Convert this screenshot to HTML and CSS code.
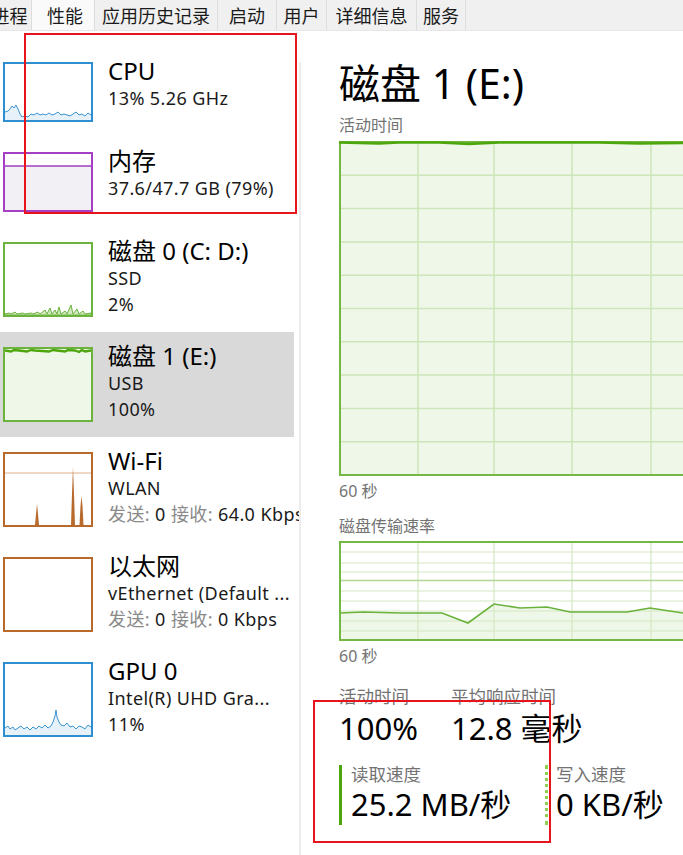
FILE: index.html
```html
<!DOCTYPE html>
<html lang="zh-CN">
<head>
<meta charset="utf-8">
<title>任务管理器 - 性能</title>
<link rel="stylesheet" href="styles.css">
</head>
<body>
<div class="app">
  <nav class="tabs">
    <div class="tab t-proc">进程</div>
    <div class="tab t-perf active">性能</div>
    <div class="tab t-hist">应用历史记录</div>
    <div class="tab t-start">启动</div>
    <div class="tab t-user">用户</div>
    <div class="tab t-detail">详细信息</div>
    <div class="tab t-svc">服务</div>
  </nav>

  <div class="main">
    <aside class="sidebar">
      <div class="item">
        <div class="thumb short blue">
          <svg viewBox="0 0 86 56" preserveAspectRatio="none">
            <polygon fill="#e6f1fa" points="0,56 0,48 3,47 5,45 7,42 9,44 11,41 13,45 15,50 17,53 20,52 23,53 26,50 29,51 32,49 35,51 38,50 41,51 44,49 47,51 50,50 53,48 56,51 59,50 62,51 65,52 68,50 71,48 74,51 77,50 80,52 83,49 86,51 86,56"/>
            <polyline fill="none" stroke="#3b95d1" stroke-width="1" points="0,48 3,47 5,45 7,42 9,44 11,41 13,45 15,50 17,53 20,52 23,53 26,50 29,51 32,49 35,51 38,50 41,51 44,49 47,51 50,50 53,48 56,51 59,50 62,51 65,52 68,50 71,48 74,51 77,50 80,52 83,49 86,51"/>
          </svg>
        </div>
        <div class="info">
          <div class="name">CPU</div>
          <div class="line">13% 5.26 GHz</div>
        </div>
      </div>

      <div class="item">
        <div class="thumb short purple">
          <svg viewBox="0 0 86 56" preserveAspectRatio="none">
            <rect x="0" y="12" width="86" height="44" fill="#f2f0f4"/>
            <line x1="0" y1="12" x2="86" y2="12" stroke="#a13fc1" stroke-width="1.6"/>
          </svg>
        </div>
        <div class="info">
          <div class="name">内存</div>
          <div class="line">37.6/47.7 GB (79%)</div>
        </div>
      </div>

      <div class="item">
        <div class="thumb green">
          <svg viewBox="0 0 86 71" preserveAspectRatio="none">
            <polygon fill="#d3e9c2" stroke="#6ab23c" stroke-width="1" points="0,71 0,70 4,69 6,70 10,68 12,70 18,69 20,70 26,69 28,70 33,68 35,70 40,66 42,70 45,64 47,70 50,66 52,70 54,63 56,70 60,67 62,70 66,61 68,70 72,65 74,70 78,67 80,70 86,69 86,71"/>
          </svg>
        </div>
        <div class="info">
          <div class="name">磁盘 0 (C: D:)</div>
          <div class="line">SSD</div>
          <div class="line">2%</div>
        </div>
      </div>

      <div class="item selected">
        <div class="thumb green">
          <svg viewBox="0 0 86 71" preserveAspectRatio="none">
            <rect x="0" y="0" width="86" height="71" fill="#eff7e9"/>
            <polyline fill="none" stroke="#4da60c" stroke-width="2.4" points="0,1.5 6,2.5 9,1 14,1.5 22,2.5 26,1 30,1.5 44,2.5 48,1 52,1.5 60,2.5 63,1 70,1.5 74,3 77,1 80,2.5 86,1.5"/>
          </svg>
        </div>
        <div class="info">
          <div class="name">磁盘 1 (E:)</div>
          <div class="line">USB</div>
          <div class="line">100%</div>
        </div>
      </div>

      <div class="item">
        <div class="thumb orange">
          <svg viewBox="0 0 86 71" preserveAspectRatio="none">
            <line x1="0" y1="19" x2="86" y2="19" stroke="#deb08a" stroke-width="1"/>
            <polygon fill="#b8692c" points="30,71 31,60 32,50 33,60 34,71"/>
            <polygon fill="#b8692c" points="66,71 67,40 68,13 69,40 70,71"/>
            <polygon fill="#b8692c" points="74.5,71 75.5,52 76.5,42 77.5,52 78.5,71"/>
          </svg>
        </div>
        <div class="info">
          <div class="name">Wi-Fi</div>
          <div class="line">WLAN</div>
          <div class="line"><span class="muted">发送:</span> 0 <span class="muted">接收:</span> 64.0 Kbps</div>
        </div>
      </div>

      <div class="item">
        <div class="thumb orange"></div>
        <div class="info">
          <div class="name">以太网</div>
          <div class="line">vEthernet (Default ...</div>
          <div class="line"><span class="muted">发送:</span> 0 <span class="muted">接收:</span> 0 Kbps</div>
        </div>
      </div>

      <div class="item">
        <div class="thumb blue">
          <svg viewBox="0 0 86 71" preserveAspectRatio="none">
            <polygon fill="#e6f1fa" points="0,71 0,64 3,62 5,65 8,63 10,66 13,64 16,62 19,65 22,63 25,66 28,63 31,65 34,62 37,64 40,61 43,64 46,62 48,58 50,52 51,46 52,53 54,58 56,61 59,62 62,59 65,63 68,62 71,65 74,62 77,63 80,65 83,61 86,63 86,71"/>
            <polyline fill="none" stroke="#3b95d1" stroke-width="1" points="0,64 3,62 5,65 8,63 10,66 13,64 16,62 19,65 22,63 25,66 28,63 31,65 34,62 37,64 40,61 43,64 46,62 48,58 50,52 51,46 52,53 54,58 56,61 59,62 62,59 65,63 68,62 71,65 74,62 77,63 80,65 83,61 86,63"/>
          </svg>
        </div>
        <div class="info">
          <div class="name">GPU 0</div>
          <div class="line">Intel(R) UHD Gra...</div>
          <div class="line">11%</div>
        </div>
      </div>
    </aside>

    <div class="divider"></div>

    <section class="detail">
      <h1 class="title">磁盘 1 (E:)</h1>
      <div class="label title-gap">活动时间</div>
      <div class="graph g-active">
        <svg width="400" height="335" viewBox="0 0 400 335">
          <rect x="1" y="1" width="398" height="333" fill="#eff7e9"/>
          <g stroke="#cde5b9" stroke-width="1.5">
            <line x1="79" y1="0" x2="79" y2="335"/>
            <line x1="155" y1="0" x2="155" y2="335"/>
            <line x1="233" y1="0" x2="233" y2="335"/>
            <line x1="312" y1="0" x2="312" y2="335"/>
            <line x1="390" y1="0" x2="390" y2="335"/>
            <line x1="0" y1="34.3" x2="400" y2="34.3"/>
            <line x1="0" y1="67.6" x2="400" y2="67.6"/>
            <line x1="0" y1="100.9" x2="400" y2="100.9"/>
            <line x1="0" y1="134.2" x2="400" y2="134.2"/>
            <line x1="0" y1="167.5" x2="400" y2="167.5"/>
            <line x1="0" y1="200.8" x2="400" y2="200.8"/>
            <line x1="0" y1="234.1" x2="400" y2="234.1"/>
            <line x1="0" y1="267.4" x2="400" y2="267.4"/>
            <line x1="0" y1="300.7" x2="400" y2="300.7"/>
          </g>
          <rect x="1" y="1" width="398" height="333" fill="none" stroke="#72b843" stroke-width="2"/>
          <polyline fill="none" stroke="#4da60c" stroke-width="2.4" points="0,1.5 40,2.5 60,1.5 100,1.5 130,3 160,1.5 260,1.5 300,2.5 400,1.5"/>
        </svg>
      </div>
      <div class="axis">60 秒</div>

      <div class="label rate-gap">磁盘传输速率</div>
      <div class="graph g-rate">
        <svg width="400" height="100" viewBox="0 0 400 100">
          <rect x="1" y="1" width="398" height="98" fill="#ffffff"/>
          <polygon fill="#eff7e9" points="1,72 24,71 62,72 103,72 129,82 155,63 181,67 208,66 231,71 288,71 311,67 344,72 400,72 400,99 1,99"/>
          <g stroke="#d3e8c2" stroke-width="1.2">
            <line x1="79" y1="0" x2="79" y2="100"/>
            <line x1="155" y1="0" x2="155" y2="100"/>
            <line x1="233" y1="0" x2="233" y2="100"/>
            <line x1="312" y1="0" x2="312" y2="100"/>
            <line x1="390" y1="0" x2="390" y2="100"/>
            <line x1="0" y1="11" x2="400" y2="11"/>
            <line x1="0" y1="22" x2="400" y2="22"/>
            <line x1="0" y1="31" x2="400" y2="31"/>
            <line x1="0" y1="50" x2="400" y2="50"/>
            <line x1="0" y1="60" x2="400" y2="60"/>
            <line x1="0" y1="70" x2="400" y2="70"/>
            <line x1="0" y1="80" x2="400" y2="80"/>
            <line x1="0" y1="90" x2="400" y2="90"/>
          </g>
          <line x1="0" y1="39.5" x2="400" y2="39.5" stroke="#b2d696" stroke-width="1.5"/>
          <polyline fill="none" stroke="#6ab23c" stroke-width="1.6" points="1,72 24,71 62,72 103,72 129,82 155,63 181,67 208,66 231,71 288,71 311,67 344,72 400,72"/>
          <rect x="1" y="1" width="398" height="98" fill="none" stroke="#72b843" stroke-width="2"/>
        </svg>
      </div>
      <div class="axis">60 秒</div>

      <div class="stats">
        <div class="stat-row">
          <div class="stat">
            <div class="stat-label">活动时间</div>
            <div class="value">100%</div>
          </div>
          <div class="stat">
            <div class="stat-label">平均响应时间</div>
            <div class="value">12.8 毫秒</div>
          </div>
        </div>
        <div class="speed-row">
          <div class="speed read">
            <div class="stat-label">读取速度</div>
            <div class="value">25.2 MB/秒</div>
          </div>
          <div class="speed write">
            <div class="stat-label">写入速度</div>
            <div class="value">0 KB/秒</div>
          </div>
        </div>
      </div>
    </section>
  </div>

  <div class="annot a1"></div>
  <div class="annot a2"></div>
</div>
</body>
</html>
```

FILE: styles.css
```css
html, body {
  margin: 0;
  padding: 0;
}

body {
  width: 683px;
  height: 855px;
  overflow: hidden;
  background: #ffffff;
  color: #000000;
  font-family: "Noto Sans", "Noto Sans CJK SC", sans-serif;
}

.app {
  position: relative;
  width: 683px;
  height: 855px;
  overflow: hidden;
}

/* ---------- tabs ---------- */
.tabs {
  display: flex;
  height: 30px;
  background: #f0f0f0;
  border-bottom: 1px solid #e6e6e6;
  font-family: "Noto Sans CJK SC", sans-serif;
  font-size: 18px;
  line-height: 30px;
}

.tab {
  flex: none;
  box-sizing: border-box;
  text-align: center;
  white-space: nowrap;
  color: #1a1a1a;
  border-right: 1px solid #dddddd;
}

.tab.active {
  background: #fafafa;
}

.t-proc { width: 44px; margin-left: -12px; }
.t-perf { width: 63px; padding-left: 4px; }
.t-hist { width: 123px; }
.t-start { width: 59px; }
.t-user { width: 50px; }
.t-detail { width: 90px; }
.t-svc { width: 49px; }

/* ---------- layout ---------- */
.main {
  display: flex;
  height: 824px;
}

.sidebar {
  flex: none;
  width: 299px;
  padding-top: 16px;
  overflow: hidden;
}

.divider {
  flex: none;
  width: 2px;
  margin-top: 31px;
  background: #ececec;
}

/* ---------- sidebar items ---------- */
.item {
  display: flex;
  width: 294px;
  box-sizing: border-box;
  padding: 15px 0 15px 3px;
}

.item.selected {
  background: #d9d9d9;
}

.thumb {
  flex: none;
  width: 90px;
  height: 75px;
  box-sizing: border-box;
  border: 2px solid;
  background: #ffffff;
}

.thumb.short { height: 60px; }
.thumb.blue { border-color: #2d8fd0; }
.thumb.purple { border-color: #a53fc4; }
.thumb.green { border-color: #6cb33e; }
.thumb.orange { border-color: #b8692c; }

.thumb svg {
  display: block;
  width: 100%;
  height: 100%;
}

.info {
  margin-left: 15px;
  margin-top: -5px;
  white-space: nowrap;
}

.name {
  font-size: 24px;
  line-height: 28px;
}

.line {
  font-size: 18px;
  line-height: 26px;
  letter-spacing: 0.4px;
  color: #1a1a1a;
}

.muted {
  color: #8a8a8a;
}

/* ---------- detail ---------- */
.detail {
  flex: 1;
  min-width: 0;
  padding: 28px 0 0 38px;
  overflow: hidden;
}

.title {
  margin: 0;
  font-size: 41px;
  line-height: 48px;
  font-weight: 400;
  white-space: nowrap;
}

.label {
  font-size: 16px;
  line-height: 20px;
  color: #737373;
  white-space: nowrap;
}

.title-gap { margin-top: 8px; }
.rate-gap { margin-top: 15px; }

.graph svg { display: block; }
.g-active { margin-top: 6px; }
.g-rate { margin-top: 5px; }

.axis {
  margin-top: 5px;
  font-size: 16px;
  line-height: 20px;
  color: #737373;
}

.stats { margin-top: 19px; }

.stat-row { display: flex; }

.stat {
  width: 112px;
  flex: none;
  white-space: nowrap;
}

.stat-label {
  font-size: 17.5px;
  line-height: 22px;
  color: #737373;
  white-space: nowrap;
}

.value {
  margin-top: 3px;
  font-size: 31px;
  line-height: 36px;
  white-space: nowrap;
}

.speed-row {
  display: flex;
  margin-top: 19px;
}

.speed {
  flex: none;
  height: 60px;
  box-sizing: border-box;
}

.speed.read {
  width: 206px;
  padding-left: 9px;
  border-left: 3px solid #4da60c;
}

.speed.write {
  padding-left: 8px;
  border-left: 3px dotted #8fd24f;
}

.speed .stat-label { margin-top: -2px; }

.speed .value {
  margin-top: 1px;
}

/* ---------- annotation boxes ---------- */
.annot {
  position: absolute;
  box-sizing: border-box;
  border: 2px solid #e8141c;
  pointer-events: none;
}

.a1 { left: 24px; top: 33px; width: 273px; height: 181px; }
.a2 { left: 313px; top: 700px; width: 238px; height: 143px; }
```
